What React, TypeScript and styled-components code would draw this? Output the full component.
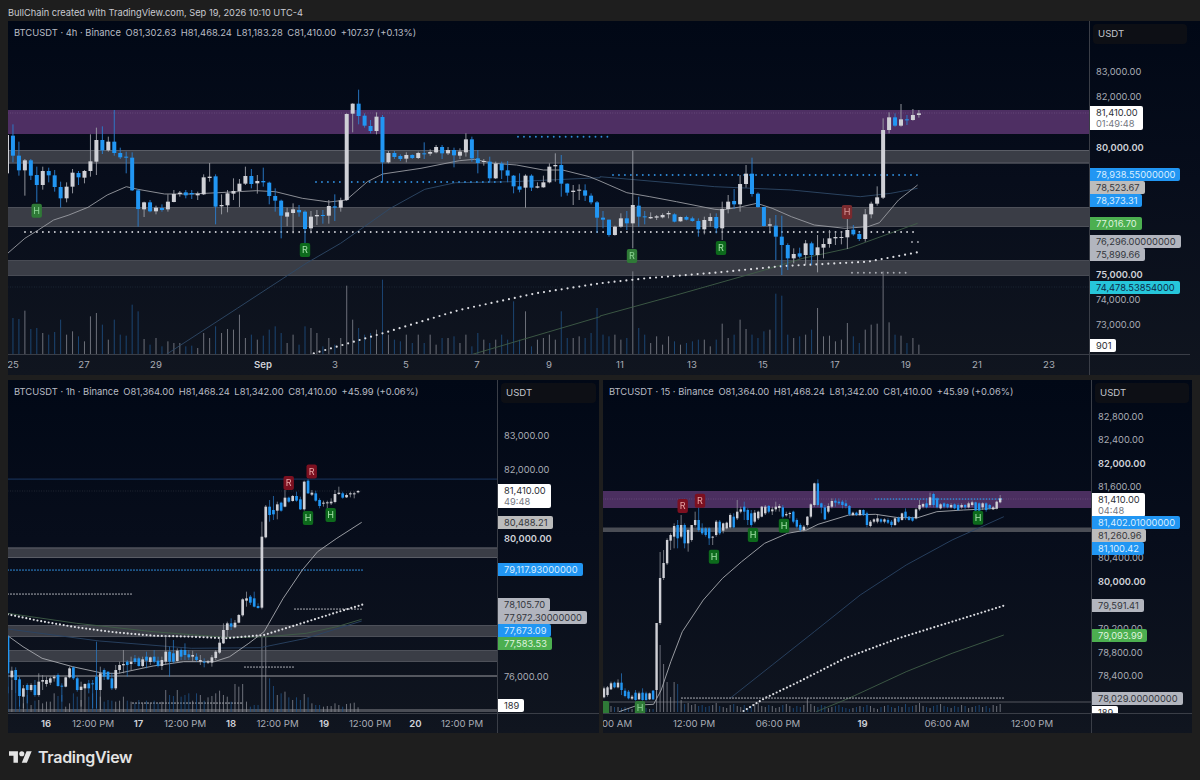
import React from 'react';
import styled, { createGlobalStyle } from 'styled-components';

type Candle = { up: boolean; wt: number; bt: number; bb: number; wb: number };
type Tag = { y: number; text: string; kind?: 'plain' | 'bold' | 'white' | 'blue' | 'grey' | 'slate' | 'green' | 'teal'; sub?: string };
type Tick = { x: number; text: string; bold?: boolean };
type Mark = { x: number; y: number; letter: string; tone: 'green' | 'fade' | 'red' | 'redFade' };
type Dots = { x1: number; x2: number; y: number; color: string; gap: number; w?: number };

// reads "w118,152,212,232 b..." where values were measured on 3x crops starting at y0
const parseCandles = (src: string, y0: number): Candle[] =>
  src
    .trim()
    .split(/\s+/)
    .map((tok) => {
      const [wt, bt, bb, wb] = tok.slice(1).split(',').map((n) => y0 + Number(n) / 3);
      return { up: tok[0] === 'w', wt, bt, bb, wb };
    });

// polyline points measured on the overview crops
const trace = (x0: number, y0: number, src: string) =>
  src
    .trim()
    .split(/\s+/)
    .map((p) => {
      const [a, b] = p.split(',').map(Number);
      return `${(x0 + a / 2.613).toFixed(1)},${(y0 + b / 3).toFixed(1)}`;
    })
    .join(' ');

const topCandles = parseCandles(
  `w145,150,265,270 b118,152,212,232 b170,212,256,272 w222,226,256,332 b222,226,272,285 b245,270,300,352 w245,258,300,314
  b248,258,271,292 b255,271,306,320 b290,306,340,368 w292,305,340,352 w252,263,305,325 b258,264,277,300 w255,258,278,295
  w148,229,258,275 w128,165,230,270 b124,165,196,207 w155,170,196,200 b75,170,204,212 b188,204,217,222 b200,215,217,265
  b202,218,316,318 b312,316,372,425 w350,352,373,396 b345,352,379,382 w362,368,379,388 b358,369,375,380 w328,350,373,380
  w315,327,351,352 w318,323,327,335 b315,322,331,340 b315,324,328,342 w320,326,331,345 w268,277,328,330 w234,275,279,290
  b268,274,365,418 w328,360,364,388 w315,325,361,382 w280,318,326,345 w282,296,318,366 w245,273,296,300 b252,273,297,310
  w270,288,295,326 b248,288,292,305 b290,293,333,358 b310,333,347,380 b344,347,392,460 w368,382,395,424 w355,373,384,445
  b360,375,382,395 b376,380,432,475 w378,395,430,445 w375,390,394,420 b375,390,392,416 w345,363,392,416 b328,364,368,408
  w338,346,368,380 w85,87,345,348 w55,56,86,142 b14,56,93,118 b85,92,122,128 b105,123,138,145 w82,95,138,148 b90,96,232,293
  w198,204,232,235 b198,204,216,222 b208,213,222,228 w202,210,221,232 b208,210,219,222 w200,204,219,222 b172,205,208,222
  w193,201,206,212 w180,186,202,205 b180,186,205,222 w186,195,205,210 b188,195,211,247 w190,200,212,222 w145,163,202,215
  b155,163,220,230 b195,220,234,265 w222,228,230,242 b215,230,280,292 w230,236,280,282 b230,236,256,282 b228,256,272,292
  b270,272,304,325 b265,304,314,322 w268,272,308,368 b268,272,308,318 w292,304,308,310 w272,292,307,308 w235,245,292,295
  w205,240,244,290 b210,240,296,335 b295,296,323,332 w300,317,321,360 w298,314,316,345 b298,316,332,348 b325,332,352,358
  b348,352,398,444 b378,398,404,430 b404,404,450,455 w422,425,450,452 w385,400,425,428 b378,400,415,435 w197,360,415,490
  b335,362,395,425 b378,394,397,418 w382,396,400,402 w390,394,398,405 w385,390,397,400 w378,384,388,400 b385,388,410,412
  w395,396,409,410 b392,396,404,406 b395,400,408,410 b400,408,433,455 w395,405,433,448 w385,396,408,425 b385,396,430,445
  w350,372,430,465 w330,350,372,385 b312,348,358,372 w270,297,358,380 w240,266,297,308 b218,266,327,335 b322,326,366,368
  b365,366,423,425 w400,418,422,445 b390,422,455,525 b392,455,480,570 b475,480,520,555 w490,507,520,535 b488,505,515,520
  w465,475,510,540 b470,475,510,540 w450,487,510,562 w460,477,488,520 w435,460,477,488 w440,456,460,480 w438,456,459,478
  w402,435,457,492 b420,434,448,452 b440,447,462,468 w372,388,462,470 w350,356,388,400 w304,337,356,362 w100,135,338,342
  w82,97,135,145 b85,97,122,125 w57,103,122,125 b90,103,105,120 w72,90,105,107 w75,85,90,98`,
  85
);

const topVolumeTops = [
  955, 958, 933, 988, 985, 1000, 1005, 997, 960, 1005, 995, 1010, 1025, 950, 940, 975, 1020, 960, 1005, 1008, 915, 935, 1018,
  1035, 1015, 1040, 1025, 1030, 1030, 1040, 1038, 1045, 1000, 1015, 980, 1000, 988, 990, 945, 1015, 1005, 1020, 1008, 990, 980,
  1000, 1030, 1005, 1035, 980, 985, 1000, 1040, 1015, 1035, 1015, 858, 960, 985, 1005, 1000, 990, 840, 1005, 1020, 1025, 1005,
  1030, 1005, 1030, 1005, 1035, 1015, 1015, 1010, 1030, 1005, 1040, 1000, 1020, 1030, 1020, 1005, 1020, 905, 1020, 935, 1040,
  1020, 1015, 1005, 1020, 935, 1015, 1015, 1010, 1015, 1000, 925, 1005, 1010, 1005, 1020, 1015, 815, 985, 1005, 1030, 1010, 1035,
  1010, 1025, 1035, 1030, 1025, 1020, 1020, 1040, 1020, 972, 1015, 1005, 960, 988, 1005, 1015, 995, 990, 882, 888, 1005, 1015,
  1010, 1005, 990, 925, 1010, 1008, 1025, 1020, 970, 1010, 1030, 990, 975, 972, 815, 968, 1005, 1008, 1030, 1015, 1035,
];

const hourCandles = parseCandles(
  `b525,530,640,700 w620,632,652,690 b622,630,660,700 b650,658,708,740 w675,685,710,745 b670,675,690,730 w670,675,690,695
  b660,675,705,710 w640,665,705,710 w645,660,665,690 w650,660,672,680 w650,655,668,675 w645,650,655,665 b640,645,678,680
  b670,677,680,725 w650,652,680,682 w620,625,652,655 b620,622,655,660 b650,655,690,695 w665,680,690,740 w670,672,685,690
  b660,670,685,700 b660,670,672,745 b545,650,690,745 w620,640,690,750 b625,630,650,660 b635,635,658,660 b640,655,685,690
  w615,630,685,690 w605,615,630,640 w570,612,616,640 b600,605,615,650 w590,605,612,630 b585,595,606,612 b590,595,618,620
  w590,598,618,622 b575,590,602,625 w590,592,606,615 b570,590,605,610 b590,602,618,622 w590,600,618,630 w525,575,605,615
  b560,575,605,650 b540,580,605,610 w565,572,603,605 b565,570,590,600 b550,570,585,600 b570,583,592,600 w572,585,590,605
  b580,590,600,605 w585,600,605,615 b595,605,608,622 w600,604,608,612 w585,592,608,620 w570,575,594,600 w535,548,578,582
  w490,510,550,552 w485,490,510,530 b475,490,500,510 w480,488,502,505 w462,465,488,490 w415,418,466,470 w395,415,422,440
  b405,410,428,435 b395,415,440,442 b430,438,444,446 w185,230,443,448 w135,140,232,235 b120,140,165,185 b108,150,163,180
  w125,133,152,178 b125,128,152,155 w90,113,140,142 b110,113,125,128 w105,108,123,125 b95,108,122,125 b110,118,148,150
  w62,65,148,152 b58,62,100,102 w90,98,104,108 b92,100,122,125 b115,120,138,145 w122,128,130,140 w122,127,130,150
  w115,125,130,135 w90,102,126,130 w80,98,102,105 b95,100,113,116 w100,105,112,114 w95,100,103,112 w95,100,102,115 w90,93,97,100`,
  460
);

const hourVolumeTops = [
  680, 660, 700, 720, 730, 705, 735, 722, 720, 730, 725, 725, 700, 708, 705, 740, 730, 700, 710, 720, 690, 710, 700, 640, 710,
  725, 720, 722, 725, 722, 710, 722, 725, 730, 720, 730, 722, 730, 722, 730, 725, 690, 705, 708, 690, 710, 705, 700, 722, 700,
  705, 722, 712, 708, 700, 692, 705, 710, 725, 672, 680, 672, 725, 740, 735, 735, 530, 530, 655, 678, 705, 700, 695, 712, 720,
  712, 720, 702, 712, 730, 735, 735, 740, 738, 738, 730, 735, 740, 732, 730, 728, 742, 745,
];

const quarterCandles = [
  ...parseCandles(
    `w140,145,172,175 w138,142,165,170 w125,130,148,150 b125,128,142,145 w118,128,142,145 b100,128,150,165 b145,152,168,172
    b150,155,175,178 w165,170,176,180 b150,158,180,182 w155,160,178,180 b145,158,180,182 b155,160,180,182 w158,160,178,180 b150,152,178,180`,
    640
  ),
  ...parseCandles(
    `w459,459,660,684 w246,324,459,465 w240,279,324,330 w205,210,280,285 w190,195,212,240 w160,168,200,235 b150,165,205,235
    w135,165,200,205 b160,165,220,235 w178,180,220,245 w165,165,210,215 w125,150,165,170 b110,150,180,185 b160,175,190,195
    b172,175,195,200 b172,175,205,225 w198,200,203,225 w150,155,195,200 b150,155,190,195 w158,160,182,190 w155,158,175,178
    w130,135,172,175 b130,140,172,175 w90,125,145,150 w110,118,125,130 b95,110,125,150 b115,120,150,165 b120,130,165,170
    w120,128,155,160 w122,125,145,150 w108,110,140,142 w105,110,130,135 b105,108,125,130 w110,118,124,135 w95,110,118,125
    w102,108,114,125 b105,112,140,145 w125,132,136,140 w125,129,132,145 b122,125,155,160 b145,150,170,175 b160,165,180,185
    w165,170,180,185 w138,140,165,170 w100,103,140,145 w38,40,105,110 b28,40,105,110 b98,100,112,130 b105,112,148,150
    w100,108,125,130 w85,93,110,115 b85,92,98,110 b85,95,100,105 b90,95,105,115 b90,100,108,115 b105,108,133,138
    w125,128,135,138 b125,128,135,138 w118,120,135,138 b118,120,135,138 b125,130,165,172 w150,155,168,172 w145,148,155,160
    w132,145,155,160 b145,148,155,160 w145,148,155,160 b145,150,158,162 b150,155,165,172 w142,145,165,168 b140,143,155,158
    w128,130,150,152 b115,125,143,150 b138,140,150,152 b140,143,152,155 w115,118,145,148 w90,105,118,122 w98,102,110,115
    b85,100,112,115 w68,82,105,110 b68,72,105,112 b82,85,112,115 w100,103,115,118 b97,100,110,115 b100,102,112,115
    w100,105,112,115 b100,103,115,118 b100,105,120,122 w100,105,112,116 b102,105,112,118 w95,100,112,115 w92,97,105,110
    b95,97,122,125 b97,100,122,125 w97,100,112,120 b97,100,120,125 b102,105,115,118 w108,112,118,120 w92,95,115,118 w75,85,97,100`,
    470
  ),
];

const quarterVolumes = [
  5, 4, 6, 5, 5, 4, 5, 3, 3, 4, 3, 5, 4, 3, 3, 70, 67, 48, 30, 15, 30, 28, 12, 8, 9, 7, 8, 6, 7, 5, 6, 7, 9, 6, 5, 4, 7, 8, 6, 5, 7,
  4, 6, 8, 9, 6, 5, 7, 6, 4, 5, 7, 8, 6, 4, 6, 5, 7, 14, 8, 6, 5, 7, 6, 4, 5, 6, 7, 5, 4, 3, 4, 5, 6, 5, 7, 6, 4, 3, 5, 6, 7, 5, 4,
  6, 5, 8, 5, 6, 7, 9, 6, 5, 4, 6, 7, 8, 6, 5, 4, 6, 5, 7, 6, 4, 5, 6, 7, 5, 6, 4, 7, 6, 8, 10,
];

const GlobalStyle = createGlobalStyle`
  html, body {
    margin: 0;
    padding: 0;
    background: #1e1e1e;
  }
  body {
    font-family: 'Inter', 'Liberation Sans', sans-serif;
  }
`;

const Page = styled.div`
  width: 1200px;
  height: 780px;
  overflow: hidden;
  padding-left: 8px;
  box-sizing: border-box;
  background: #1e1e1e;
  display: flex;
  flex-direction: column;
`;

const Caption = styled.div`
  height: 21px;
  line-height: 25px;
  font-size: 9.25px;
  color: #c9cbd1;
  white-space: nowrap;
`;

const Pane = styled.div<{ $plot: number; $axis: number; $time: number }>`
  display: grid;
  grid-template-columns: ${(p) => p.$plot}px ${(p) => p.$axis}px;
  grid-template-rows: 333px ${(p) => p.$time}px;
  background: linear-gradient(180deg, #010816 0%, #070d1b 45%, #10151f 100%);
  flex: none;
`;

const PlotCell = styled.div`
  position: relative;
  overflow: hidden;
`;

const Legend = styled.div`
  position: absolute;
  left: 6px;
  top: 5px;
  display: flex;
  gap: 4.6px;
  font-size: 9.4px;
  line-height: 14px;
  color: #b9bcc4;
  white-space: nowrap;
`;

const ChartSvg = styled.svg`
  display: block;
  filter: blur(0.3px);
`;

const PriceScale = styled.div`
  position: relative;
  overflow: hidden;
  border-left: 1px solid #3a3e47;
`;

const UnitBox = styled.div`
  position: absolute;
  left: 3px;
  right: 3px;
  top: 3px;
  height: 20px;
  box-sizing: border-box;
  padding-left: 5px;
  background: #0d0f15;
  border-radius: 4px;
  color: #c3c6cd;
  font-size: 9.6px;
  line-height: 20px;
`;

const tagColors = {
  plain: ['transparent', '#a9acb5'],
  bold: ['transparent', '#cfd2d9'],
  white: ['#ffffff', '#2c2f36'],
  blue: ['#2196f3', '#d9eeff'],
  grey: ['#bcbcbc', '#34363b'],
  slate: ['#b2b5be', '#32353c'],
  green: ['#4caf50', '#dff3df'],
  teal: ['#26c6da', '#0d2a48'],
};

const PriceTag = styled.div.attrs<{ $y: number }>((p) => ({ style: { top: p.$y } }))<{
  $y: number;
  $kind: keyof typeof tagColors;
}>`
  position: absolute;
  left: 0;
  padding: 0 5px 0 6px;
  border-radius: 0 2px 2px 0;
  background: ${(p) => tagColors[p.$kind][0]};
  color: ${(p) => tagColors[p.$kind][1]};
  font-size: 9.3px;
  line-height: 13px;
  font-weight: ${(p) => (p.$kind === 'bold' ? 600 : 400)};
  white-space: nowrap;
`;

const Countdown = styled.div`
  color: #74777f;
  line-height: 10.5px;
`;

const TimeScale = styled.div`
  position: relative;
  overflow: hidden;
  border-top: 1px solid #3a3e47;
`;

const TimeCorner = styled.div`
  border-top: 1px solid #3a3e47;
  border-left: 1px solid #3a3e47;
`;

const TimeLabel = styled.span.attrs<{ $x: number }>((p) => ({ style: { left: p.$x } }))<{ $x: number; $bold?: boolean }>`
  position: absolute;
  top: 3px;
  transform: translateX(-50%);
  font-size: 9.6px;
  line-height: 14px;
  color: ${(p) => (p.$bold ? '#cfd2d9' : '#a9acb5')};
  font-weight: ${(p) => (p.$bold ? 600 : 400)};
  white-space: nowrap;
`;

const BottomRow = styled.div`
  margin-top: 5px;
  display: flex;
  gap: 4px;
`;

const Footer = styled.div`
  flex: 1;
  display: flex;
  align-items: center;
  gap: 6px;
  padding: 0 0 0 1px;
`;

const Wordmark = styled.span`
  font-size: 16px;
  font-weight: 600;
  letter-spacing: -0.3px;
  color: #e4e4e4;
`;

const markTones = {
  green: ['#0d6a1c', '#a6e3ab'],
  fade: ['#2f7a37', '#8fd697'],
  red: ['#7c1020', '#e9a6a6'],
  redFade: ['#7a2a2e', '#d99a9a'],
};

function Volumes({ data, x0, step, base, heights }: { data: Candle[]; x0: number; step: number; base: number; heights: number[] }) {
  return (
    <g>
      {data.map((c, i) => {
        const x = x0 + i * step;
        return (
          <line
            key={i}
            x1={x}
            x2={x}
            y1={base}
            y2={base - (heights[i] ?? 0)}
            stroke={c.up ? '#8c8f98' : '#20568f'}
            strokeOpacity={0.75}
            strokeWidth={1}
          />
        );
      })}
    </g>
  );
}

function Bars({ data, x0, step, width, wick = 0.9 }: { data: Candle[]; x0: number; step: number; width: number; wick?: number }) {
  return (
    <g>
      {data.map((c, i) => {
        const x = x0 + i * step;
        const fill = c.up ? '#cfd0d6' : '#2196f3';
        return (
          <g key={i}>
            <line x1={x} x2={x} y1={c.wt} y2={c.wb} stroke={c.up ? '#9ea0a8' : '#2a7fd0'} strokeWidth={wick} />
            <rect x={x - width / 2} y={c.bt} width={width} height={Math.max(c.bb - c.bt, 1)} fill={fill} />
          </g>
        );
      })}
    </g>
  );
}

function Band({ x, w, y1, y2, fill = '#3a3d46', edge }: { x: number; w: number; y1: number; y2: number; fill?: string; edge?: string }) {
  return (
    <g>
      <rect x={x} y={y1} width={w} height={y2 - y1} fill={fill} />
      {edge && <rect x={x} y={y2 - 1} width={w} height={1} fill={edge} />}
      {edge && <rect x={x} y={y1} width={w} height={1} fill={edge} />}
    </g>
  );
}

function DotLines({ items }: { items: Dots[] }) {
  return (
    <g>
      {items.map((d, i) => (
        <line
          key={i}
          x1={d.x1}
          x2={d.x2}
          y1={d.y}
          y2={d.y}
          stroke={d.color}
          strokeWidth={d.w ?? 1.9}
          strokeLinecap="round"
          strokeDasharray={`0 ${d.gap}`}
        />
      ))}
    </g>
  );
}

function Curve({ points, color, width = 0.9 }: { points: string; color: string; width?: number }) {
  return <polyline points={points} fill="none" stroke={color} strokeWidth={width} strokeLinejoin="round" />;
}

function ThickDots({ points, gap = 3.8, width = 2.2 }: { points: string; gap?: number; width?: number }) {
  return <polyline points={points} fill="none" stroke="#dcdde2" strokeWidth={width} strokeLinecap="round" strokeDasharray={`0 ${gap}`} />;
}

function Markers({ items }: { items: Mark[] }) {
  return (
    <g>
      {items.map((m, i) => (
        <g key={i}>
          <rect x={m.x - 5.2} y={m.y - 7} width={10.4} height={14} rx={2} fill={markTones[m.tone][0]} />
          {m.letter && (
            <text x={m.x} y={m.y + 3.2} textAnchor="middle" fontSize={9} fontFamily="Inter, sans-serif" fill={markTones[m.tone][1]}>
              {m.letter}
            </text>
          )}
        </g>
      ))}
    </g>
  );
}

function ChartPane(props: {
  left: number;
  top: number;
  plot: number;
  axis: number;
  time: number;
  legend: string[];
  tags: Tag[];
  ticks: Tick[];
  children: React.ReactNode;
}) {
  const { left, top, plot, axis, time, legend, tags, ticks, children } = props;
  return (
    <Pane $plot={plot} $axis={axis} $time={time}>
      <PlotCell>
        <ChartSvg width={plot} height={333} viewBox={`${left} ${top} ${plot} 333`}>
          {children}
        </ChartSvg>
        <Legend>
          {legend.map((t) => (
            <span key={t}>{t}</span>
          ))}
        </Legend>
      </PlotCell>
      <PriceScale>
        <UnitBox>USDT</UnitBox>
        {tags.map((t) => (
          <PriceTag key={t.text} $y={t.y - top} $kind={t.kind ?? 'plain'}>
            {t.text}
            {t.sub && <Countdown>{t.sub}</Countdown>}
          </PriceTag>
        ))}
      </PriceScale>
      <TimeScale>
        {ticks.map((t, i) => (
          <TimeLabel key={i} $x={t.x - left} $bold={t.bold}>
            {t.text}
          </TimeLabel>
        ))}
      </TimeScale>
      <TimeCorner />
    </Pane>
  );
}

const topTags: Tag[] = [
  { y: 64.5, text: '83,000.00' },
  { y: 89.5, text: '82,000.00' },
  { y: 140.5, text: '80,000.00', kind: 'bold' },
  { y: 317.5, text: '73,000.00' },
  { y: 292.5, text: '74,000.00' },
  { y: 267.5, text: '75,000.00', kind: 'bold' },
  { y: 106, text: '81,410.00', sub: '01:49:48', kind: 'white' },
  { y: 168, text: '78,938.55000000', kind: 'blue' },
  { y: 181, text: '78,523.67', kind: 'grey' },
  { y: 194, text: '78,373.31', kind: 'blue' },
  { y: 217, text: '77,016.70', kind: 'green' },
  { y: 235, text: '76,296.00000000', kind: 'slate' },
  { y: 248, text: '75,899.66', kind: 'slate' },
  { y: 281, text: '74,478.53854000', kind: 'teal' },
  { y: 339, text: '901', kind: 'white' },
];

const topTicks: Tick[] = [
  { x: 13, text: '25' },
  { x: 84, text: '27' },
  { x: 156, text: '29' },
  { x: 263, text: 'Sep', bold: true },
  { x: 335, text: '3' },
  { x: 406, text: '5' },
  { x: 477, text: '7' },
  { x: 549, text: '9' },
  { x: 620, text: '11' },
  { x: 692, text: '13' },
  { x: 763, text: '15' },
  { x: 835, text: '17' },
  { x: 906, text: '19' },
  { x: 977, text: '21' },
  { x: 1049, text: '23' },
];

const hourTags: Tag[] = [
  { y: 428.5, text: '83,000.00' },
  { y: 463, text: '82,000.00' },
  { y: 531.5, text: '80,000.00', kind: 'bold' },
  { y: 670, text: '76,000.00' },
  { y: 484, text: '81,410.00', sub: '49:48', kind: 'white' },
  { y: 516, text: '80,488.21', kind: 'grey' },
  { y: 563, text: '79,117.93000000', kind: 'blue' },
  { y: 598, text: '78,105.70', kind: 'slate' },
  { y: 611, text: '77,972.30000000', kind: 'slate' },
  { y: 624, text: '77,673.09', kind: 'blue' },
  { y: 637, text: '77,583.53', kind: 'green' },
  { y: 699, text: '189', kind: 'white' },
];

const hourTicks: Tick[] = [
  { x: 46, text: '16', bold: true },
  { x: 93, text: '12:00 PM' },
  { x: 138.5, text: '17', bold: true },
  { x: 185, text: '12:00 PM' },
  { x: 231, text: '18', bold: true },
  { x: 277.5, text: '12:00 PM' },
  { x: 324, text: '19', bold: true },
  { x: 370, text: '12:00 PM' },
  { x: 415.5, text: '20', bold: true },
  { x: 462, text: '12:00 PM' },
];

const quarterTags: Tag[] = [
  { y: 409.5, text: '82,800.00' },
  { y: 433, text: '82,400.00' },
  { y: 456.5, text: '82,000.00', kind: 'bold' },
  { y: 480, text: '81,600.00' },
  { y: 551, text: '80,400.00' },
  { y: 574.5, text: '80,000.00', kind: 'bold' },
  { y: 621.5, text: '79,200.00' },
  { y: 645.5, text: '78,800.00' },
  { y: 669, text: '78,400.00' },
  { y: 493, text: '81,410.00', sub: '04:48', kind: 'white' },
  { y: 516, text: '81,402.01000000', kind: 'blue' },
  { y: 529, text: '81,260.96', kind: 'grey' },
  { y: 542, text: '81,100.42', kind: 'blue' },
  { y: 599, text: '79,591.41', kind: 'slate' },
  { y: 629, text: '79,093.99', kind: 'green' },
  { y: 692, text: '78,029.00000000', kind: 'slate' },
  { y: 706, text: '189', kind: 'white' },
];

const quarterTicks: Tick[] = [
  { x: 617, text: '00 AM' },
  { x: 694, text: '12:00 PM' },
  { x: 778, text: '06:00 PM' },
  { x: 862.5, text: '19', bold: true },
  { x: 947, text: '06:00 AM' },
  { x: 1032, text: '12:00 PM' },
];

const topVolumes = [0, ...topVolumeTops.map((t) => (1063 - t) / 3)];
const hourVolumes = hourVolumeTops.map((t) => (756 - t) / 3);

export default function App() {
  return (
    <Page>
      <GlobalStyle />
      <Caption>BullChain created with TradingView.com, Sep 19, 2026 10:10 UTC-4</Caption>

      <ChartPane
        left={8}
        top={21}
        plot={1081}
        axis={101}
        time={21}
        legend={['BTCUSDT · 4h · Binance', 'O81,302.63', 'H81,468.24', 'L81,183.28', 'C81,410.00', '+107.37 (+0.13%)']}
        tags={topTags}
        ticks={topTicks}
      >
        <Band x={8} w={1081} y1={110} y2={134} fill="#4e2f63" />
        <Band x={8} w={1081} y1={150} y2={163.5} edge="#5a5d66" />
        <Band x={8} w={1081} y1={207} y2={227} edge="#4d5059" />
        <Band x={8} w={1081} y1={260} y2={276} edge="#484b54" />
        <DotLines
          items={[
            { x1: 8, x2: 1089, y: 113, color: '#7b5c8d', gap: 2.4, w: 0.7 },
            { x1: 8, x2: 1089, y: 287, color: '#2b3a48', gap: 2.4, w: 0.7 },
          ]}
        />
        <Volumes data={topCandles} x0={7} step={5.96} base={354} heights={topVolumes} />
        <Curve
          color="#2f4a68"
          points={
            trace(0, 0, '435,1063 620,925 800,790 890,730 1020,625 1110,568 1190,548 1340,545 1568,533') +
            ' ' +
            trace(600, 0, '0,530 300,560 500,570 680,590 760,580 830,565')
          }
        />
        <Curve color="#3f5d47" points={trace(0, 0, '1235,1063 1568,950') + ' ' + trace(600, 0, '0,948 200,885 430,810 530,775 650,745 830,670')} />
        <ThickDots
          gap={5.96}
          points={trace(0, 0, '820,1060 1000,1000 1200,930 1400,880 1568,850') + ' ' + trace(600, 0, '0,850 120,835 300,818 480,798 700,785 830,757')}
        />
        <Curve
          color="#9a9ca3"
          points={
            trace(0, 0, '20,760 65,715 100,690 140,660 180,645 230,622 280,585 330,560 360,568 430,582 500,582 570,578 670,572 720,575 790,595 860,606 905,600 960,545 1000,522 1100,505 1200,482 1240,478 1290,490 1350,495 1420,510 1470,510 1540,530') +
            ' ' +
            trace(600, 0, '0,543 70,578 130,590 200,605 300,628 320,630 370,620 410,610 450,625 500,650 560,675 640,685 700,680 730,668 780,600 830,555')
          }
        />
        <DotLines
          items={[
            { x1: 25, x2: 918, y: 232, color: '#d0d1d6', gap: 5.96 },
            { x1: 316, x2: 505, y: 182, color: '#2f8ad8', gap: 5.96 },
            { x1: 518, x2: 610, y: 136.7, color: '#2f8ad8', gap: 5.96 },
            { x1: 613, x2: 920, y: 175, color: '#2f8ad8', gap: 5.96 },
            { x1: 912, x2: 919, y: 242, color: '#a9abb3', gap: 5.96 },
            { x1: 852, x2: 908, y: 272.7, color: '#a9abb3', gap: 5.96 },
          ]}
        />
        <Bars data={topCandles} x0={7} step={5.96} width={4} />
        <Markers
          items={[
            { x: 36.7, y: 210.7, letter: 'H', tone: 'fade' },
            { x: 305, y: 250, letter: 'R', tone: 'green' },
            { x: 632, y: 256, letter: 'R', tone: 'fade' },
            { x: 721, y: 248, letter: 'R', tone: 'green' },
            { x: 847, y: 212, letter: 'H', tone: 'redFade' },
          ]}
        />
      </ChartPane>

      <BottomRow>
        <ChartPane
          left={8}
          top={380}
          plot={489}
          axis={102}
          time={20}
          legend={['BTCUSDT · 1h · Binance', 'O81,364.00', 'H81,468.24', 'L81,342.00', 'C81,410.00', '+45.99 (+0.06%)']}
          tags={hourTags}
          ticks={hourTicks}
        >
          <Band x={8} w={489} y1={547.5} y2={558} edge="#5a5d66" />
          <Band x={8} w={489} y1={625} y2={637} edge="#4d5059" />
          <Band x={8} w={489} y1={650} y2={662} edge="#4d5059" />
          <Band x={8} w={489} y1={675} y2={677} fill="#54575f" />
          <Band x={8} w={489} y1={709} y2={712} fill="#4a4d55" />
          <Band x={8} w={489} y1={478.6} y2={479.6} fill="#1c3763" />
          <DotLines
            items={[
              { x1: 8, x2: 363, y: 491, color: '#3a3e47', gap: 2.4, w: 0.7 },
              { x1: 8, x2: 363, y: 570, color: '#2f8ad8', gap: 3, w: 1.7 },
              { x1: 8, x2: 132, y: 594, color: '#a9abb3', gap: 3, w: 1.7 },
              { x1: 295, x2: 363, y: 609, color: '#a9abb3', gap: 3, w: 1.7 },
              { x1: 245, x2: 294, y: 667, color: '#a9abb3', gap: 3, w: 1.7 },
              { x1: 133, x2: 243, y: 703, color: '#a9abb3', gap: 3, w: 1.7 },
            ]}
          />
          <Volumes data={hourCandles} x0={8} step={3.847} base={712} heights={hourVolumes} />
          <Curve color="#3f5d47" points={trace(0, 375, '20,715 200,745 400,770 600,788 700,785 800,775 880,755 945,733')} />
          <Curve color="#2a4464" points={trace(0, 375, '20,762 260,798 500,820 680,818 800,790 945,738')} />
          <ThickDots points={trace(0, 375, '20,718 100,737 200,757 300,772 400,782 500,785 590,790 690,780 780,748 880,712 950,688')} />
          <Curve
            color="#a8aab0"
            points={trace(0, 375, '20,782 60,815 110,850 190,875 270,895 310,895 400,873 480,860 560,860 600,845 650,805 690,770 740,670 790,585 830,530 880,490 945,442')}
          />
          <Bars data={hourCandles} x0={8} step={3.847} width={2.7} wick={0.7} />
          <Markers
            items={[
              { x: 288.7, y: 483, letter: 'R', tone: 'red' },
              { x: 311.7, y: 471.5, letter: 'R', tone: 'red' },
              { x: 308, y: 518, letter: 'H', tone: 'green' },
              { x: 330.7, y: 515, letter: 'H', tone: 'green' },
            ]}
          />
        </ChartPane>

        <ChartPane
          left={603}
          top={380}
          plot={488}
          axis={101}
          time={20}
          legend={['BTCUSDT · 15 · Binance', 'O81,364.00', 'H81,468.24', 'L81,342.00', 'C81,410.00', '+45.99 (+0.06%)']}
          tags={quarterTags}
          ticks={quarterTicks}
        >
          <Band x={603} w={488} y1={491} y2={508} fill="#4b2f60" />
          <Band x={603} w={488} y1={527.5} y2={532} fill="#4a4d55" />
          <Band x={603} w={488} y1={701.5} y2={702.5} fill="#54575f" />
          <DotLines items={[{ x1: 603, x2: 1091, y: 499, color: '#7b5c8d', gap: 2.4, w: 0.7 }]} />
          <Volumes data={quarterCandles} x0={604} step={3.506} base={712} heights={quarterVolumes} />
          <Curve color="#2a4464" points={trace(600, 375, '340,970 450,870 560,770 680,660 800,570 920,495 1055,425')} />
          <Curve color="#3f5d47" points={trace(600, 375, '565,1010 650,970 800,890 920,835 1055,780')} />
          <ThickDots points={trace(600, 375, '375,1008 430,970 520,920 640,850 780,790 920,740 1055,692')} />
          <Curve
            color="#a8aab0"
            points={trace(600, 375, '50,1010 100,990 140,988 160,945 185,860 215,770 270,675 320,610 370,560 430,505 490,475 540,465 570,448 650,420 720,418 780,428 830,428 880,410 950,405 1040,400')}
          />
          <DotLines
            items={[
              { x1: 682, x2: 1005, y: 698, color: '#a9abb3', gap: 3, w: 1.7 },
              { x1: 875.5, x2: 1004, y: 499, color: '#2f8ad8', gap: 3, w: 1.7 },
            ]}
          />
          <Bars data={quarterCandles} x0={604} step={3.506} width={2.4} wick={0.7} />
          <Markers
            items={[
              { x: 682.7, y: 506, letter: 'R', tone: 'red' },
              { x: 700, y: 500.7, letter: 'R', tone: 'red' },
              { x: 714, y: 556.7, letter: 'H', tone: 'green' },
              { x: 753, y: 535, letter: 'H', tone: 'green' },
              { x: 784, y: 525.7, letter: 'H', tone: 'green' },
              { x: 978, y: 517.7, letter: 'H', tone: 'green' },
              { x: 640, y: 708, letter: 'H', tone: 'fade' },
              { x: 604, y: 708, letter: '', tone: 'fade' },
            ]}
          />
        </ChartPane>
      </BottomRow>

      <Footer>
        <svg width="23" height="12" viewBox="0 4 36 18" aria-hidden="true">
          <path d="M14 22H7V11H0V4h14v18zM28 22h-8l7.5-18h8L28 22z" fill="#e4e4e4" />
          <circle cx="20" cy="8" r="4" fill="#e4e4e4" />
        </svg>
        <Wordmark>TradingView</Wordmark>
      </Footer>
    </Page>
  );
}
